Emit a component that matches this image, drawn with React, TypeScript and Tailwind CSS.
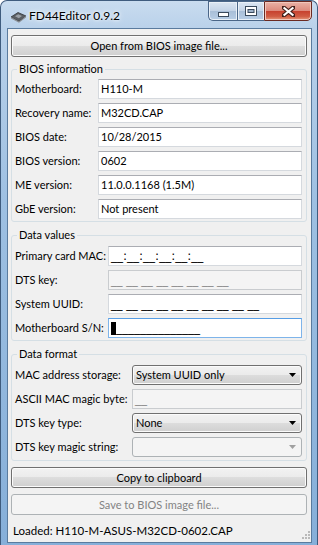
import React from 'react';

const btnOn =
  'border-[#707070] bg-[linear-gradient(180deg,#f2f2f2_0%,#ebebeb_50%,#dddddd_50%,#cfcfcf_100%)] shadow-[inset_0_0_0_1px_#fbfbfb]';
const btnOff = 'border-[#adb2b5] bg-[#f4f4f4] text-[#838383]';

type BoxProps = {
  value?: React.ReactNode;
  disabled?: boolean;
  focused?: boolean;
};

const TextBox = ({ value, disabled, focused }: BoxProps) => {
  let look = 'border-[#d5d9de] border-t-[#abadb3] bg-white';
  if (focused) look = 'border-[#7eb4ea] border-t-[#569de5] bg-white';
  if (disabled) look = 'border-[#c9cccf] bg-[#f4f4f4] text-[#8d8d8d]';
  return (
    <div className={`flex h-[20px] items-center overflow-hidden whitespace-pre border pl-[2px] ${look}`}>
      {value}
    </div>
  );
};

// input-mask placeholder; DejaVu underscores join like the original's
const Mask = ({ text, small }: { text: string; small?: boolean }) => (
  <span className={`font-['DejaVu_Sans',sans-serif] ${small ? 'text-[11.5px]' : 'text-[12px]'}`}>{text}</span>
);

const Combo = ({ value, disabled }: BoxProps) => (
  <div
    className={`flex h-[20px] items-center justify-between rounded-[3px] border pl-[3px] pr-[5px] ${disabled ? btnOff : btnOn}`}
  >
    <span>{value}</span>
    <svg width="7" height="4" viewBox="0 0 7 4">
      <path d="M0 0h7L3.5 4z" fill={disabled ? '#a0a0a0' : '#000'} />
    </svg>
  </div>
);

type GroupProps = {
  title: string;
  grid: string;
  pad: string;
  children: React.ReactNode;
};

const Group = ({ title, grid, pad, children }: GroupProps) => (
  <fieldset className={`rounded-[3px] border border-[#d5dfe5] pl-[3px] pr-[4px] ${pad}`}>
    <legend className="ml-[2px] px-[2px] leading-[16px]">{title}</legend>
    <div className={`grid gap-y-[4px] ${grid}`}>{children}</div>
  </fieldset>
);

const Label = ({ children }: { children: React.ReactNode }) => (
  <span className="flex h-[20px] items-center whitespace-nowrap">{children}</span>
);

const AppIcon = () => (
  <svg width="17" height="12" viewBox="0 0 17 12">
    <path d="M1 6 8 1.5 16 5 9 10.5z" fill="#5b5f63" stroke="#2e3236" strokeWidth="0.8" />
    <path d="M1 6v1.6l8 4.2 7-5.3V5L9 10.5z" fill="#8b9095" />
    <path d="M5 5.2 8.2 3.2 12 5 8.8 7.2z" fill="#9aa0a6" />
  </svg>
);

const CaptionButtons = () => (
  <div className="mr-[5px] flex h-[20px] shrink-0">
    <div className="flex w-[29px] items-end justify-center rounded-bl-[5px] border border-r-0 border-[#4a6688] bg-[linear-gradient(180deg,#dbe6f2_0%,#c3d3e6_50%,#a9bfd8_52%,#b8cee6_100%)] pb-[3px] shadow-[inset_0_0_0_1px_#e9f0f7]">
      <svg width="11" height="5" viewBox="0 0 11 5">
        <rect x="0.5" y="0.5" width="10" height="4" fill="#fff" stroke="#3a4a5c" />
      </svg>
    </div>
    <div className="flex w-[27px] items-center justify-center border border-r-0 border-[#4a6688] bg-[linear-gradient(180deg,#dbe6f2_0%,#c3d3e6_50%,#a9bfd8_52%,#b8cee6_100%)] shadow-[inset_0_0_0_1px_#e9f0f7]">
      <svg width="12" height="10" viewBox="0 0 12 10">
        <rect x="0.5" y="0.5" width="11" height="9" fill="#fff" stroke="#3a4a5c" />
        <rect x="3" y="3.5" width="6" height="3" fill="#9fb3ca" stroke="#3a4a5c" />
      </svg>
    </div>
    <div className="flex w-[48px] items-center justify-center rounded-br-[5px] border border-[#6b2a22] bg-[linear-gradient(180deg,#eab2a6_0%,#dd8b7d_48%,#c7422f_52%,#d05c43_80%,#e69b7d_100%)] shadow-[inset_0_0_0_1px_#f1c7bc]">
      <svg width="13" height="11" viewBox="0 0 13 11">
        <path
          d="M1 1l11 9M12 1 1 10"
          stroke="#43201b"
          strokeWidth="4.2"
          strokeLinecap="square"
        />
        <path d="M1.6 1.5l9.8 8M11.4 1.5l-9.8 8" stroke="#fff" strokeWidth="2.2" />
      </svg>
    </div>
  </div>
);

const Grip = () => (
  <svg width="8" height="8" viewBox="0 0 8 8">
    {[
      [6, 0],
      [6, 3],
      [3, 3],
      [6, 6],
      [3, 6],
      [0, 6],
    ].map(([x, y]) => (
      <rect key={`${x}-${y}`} x={x} y={y} width="2" height="2" fill="#b9b9b9" />
    ))}
  </svg>
);

const App = () => {
  return (
    <div className="h-[545px] w-[318px] overflow-hidden bg-white">
      <div className="flex h-[545px] w-[318px] flex-col rounded-t-[7px] border border-b-0 border-[#3f5c7e] bg-[linear-gradient(180deg,#c9dcef_0px,#b9d1ea_28px,#9ec0e2_200px,#86afd9_545px)] font-['Segoe_UI',Lato,sans-serif] text-[11px] leading-[16px] text-black">
        <div className="flex h-[27px] shrink-0 items-start">
          <div className="ml-[9px] mt-[10px]">
            <AppIcon />
          </div>
          <span className="ml-[2px] mt-[7px] flex-1 text-[12px] [text-shadow:0_0_6px_#fff,0_0_3px_#fff]">
            FD44Editor 0.9.2
          </span>
          <CaptionButtons />
        </div>

        <div className="mb-[2px] ml-[6px] mr-[5px] flex flex-1 flex-col border border-[#5a7b9e] bg-[#f0f0f0] pl-[3px] pr-[4px] pt-[6px]">
          <div className={`flex h-[22px] items-center justify-center rounded-[3px] border ${btnOn}`}>
            Open from BIOS image file...
          </div>

          <div className="mt-[4px]">
            <Group title="BIOS information" grid="grid-cols-[83px_1fr]" pad="pt-[2px] pb-[2px]">
              <Label>Motherboard:</Label>
              <TextBox value="H110-M" />
              <Label>Recovery name:</Label>
              <TextBox value="M32CD.CAP" />
              <Label>BIOS date:</Label>
              <TextBox value="10/28/2015" />
              <Label>BIOS version:</Label>
              <TextBox value="0602" />
              <Label>ME version:</Label>
              <TextBox value="11.0.0.1168 (1.5M)" />
              <Label>GbE version:</Label>
              <TextBox value="Not present" />
            </Group>
          </div>

          <div className="mt-[5px]">
            <Group title="Data values" grid="grid-cols-[93px_1fr]" pad="pt-[3px] pb-[2px]">
              <Label>Primary card MAC:</Label>
              <TextBox value={<Mask text="__:__:__:__:__:__" />} />
              <Label>DTS key:</Label>
              <TextBox disabled value={<Mask small text="__ __ __ __ __ __ __ __" />} />
              <Label>System UUID:</Label>
              <TextBox value={<Mask small text="__ __ __ __ __ __ __ __ __ __" />} />
              <Label>Motherboard S/N:</Label>
              <TextBox
                focused
                value={
                  <span className="flex items-center">
                    <span className="h-[13px] w-[5px] bg-black" />
                    <Mask text="______________" />
                  </span>
                }
              />
            </Group>
          </div>

          <div className="mt-[5px]">
            <Group title="Data format" grid="grid-cols-[117px_1fr]" pad="pt-[3px] pb-[3px]">
              <Label>MAC address storage:</Label>
              <Combo value="System UUID only" />
              <Label>ASCII MAC magic byte:</Label>
              <TextBox disabled value={<Mask text="__" />} />
              <Label>DTS key type:</Label>
              <Combo value="None" />
              <Label>DTS key magic string:</Label>
              <Combo disabled value="" />
            </Group>
          </div>

          <div className={`mt-[6px] flex h-[21px] items-center justify-center rounded-[3px] border ${btnOn}`}>
            Copy to clipboard
          </div>
          <div className={`mt-[6px] flex h-[21px] items-center justify-center rounded-[3px] border ${btnOff}`}>
            Save to BIOS image file...
          </div>

          <div className="mt-auto -mr-[3px] flex items-end justify-between pb-[3px] pl-[2px]">
            <span className="whitespace-nowrap text-[11.5px]">Loaded: H110-M-ASUS-M32CD-0602.CAP</span>
            <Grip />
          </div>
        </div>
      </div>
    </div>
  );
};

export default App;
